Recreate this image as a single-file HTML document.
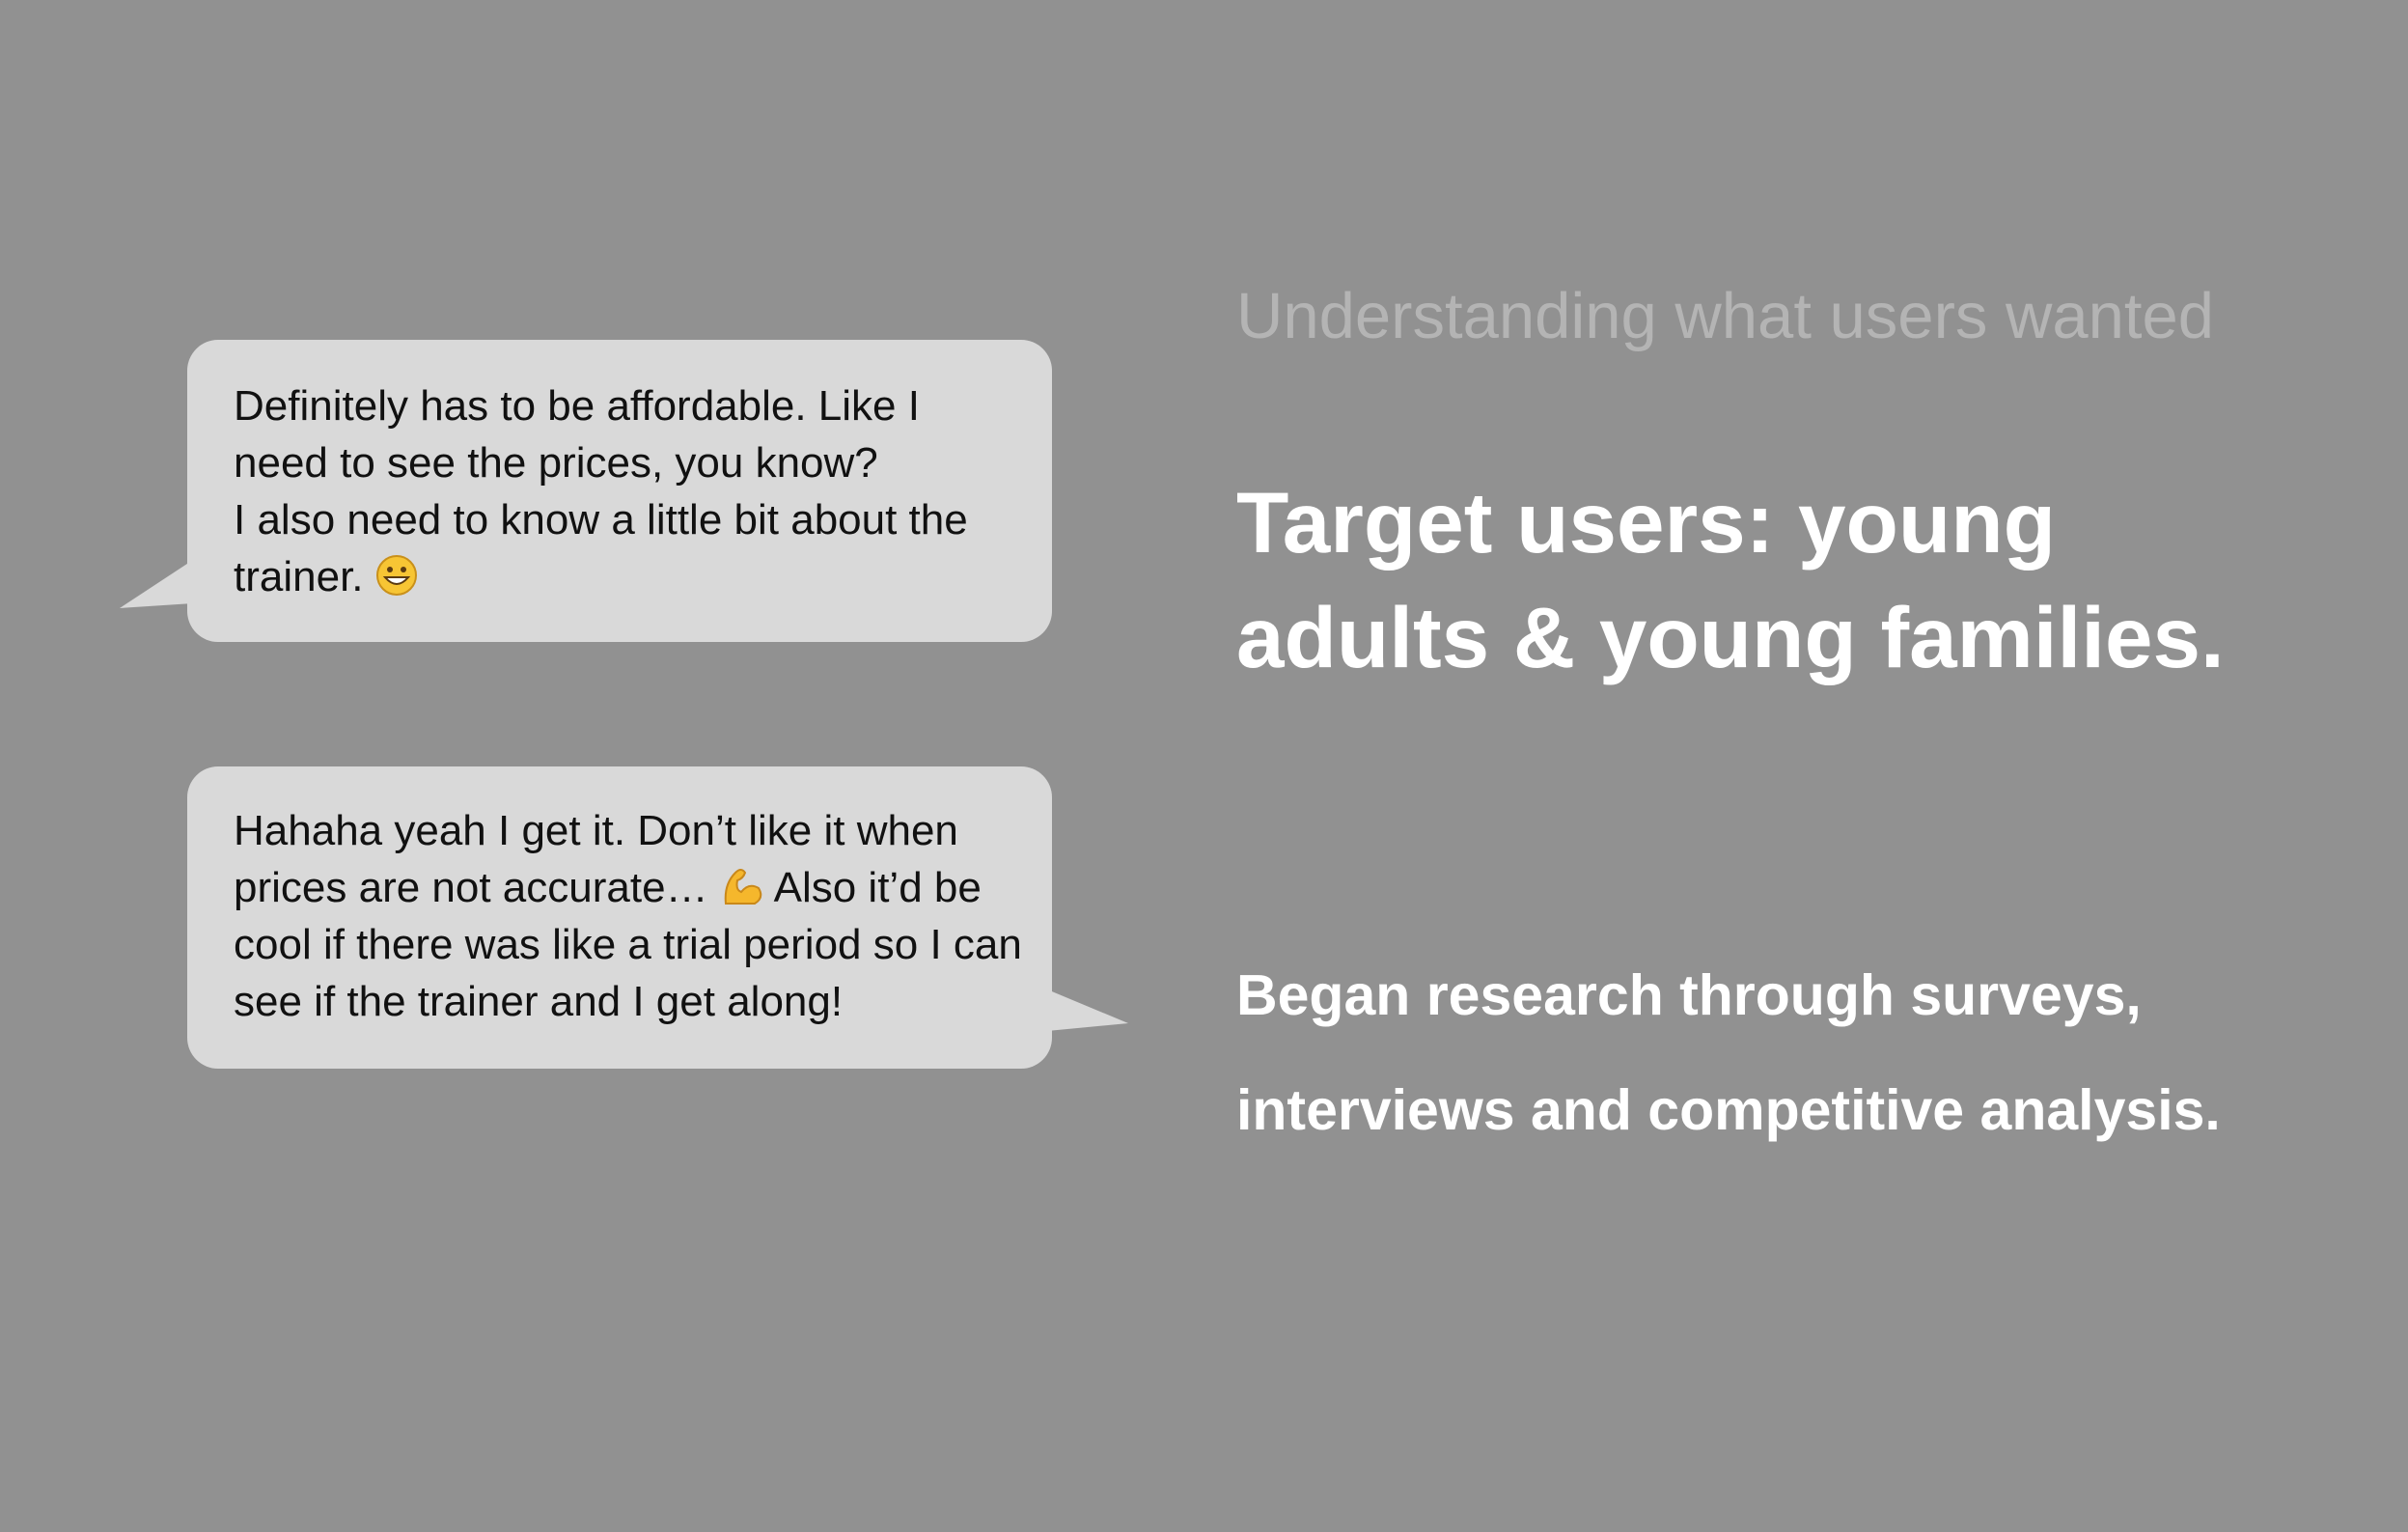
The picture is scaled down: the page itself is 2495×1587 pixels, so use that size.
<!DOCTYPE html>
<html><head><meta charset="utf-8"><style>
html,body{margin:0;padding:0}
body{width:2495px;height:1587px;background:#919191;position:relative;overflow:hidden;font-family:"Liberation Sans",sans-serif}
.b{position:absolute;left:194px;width:896px;height:313px;background:#d9d9d9;border-radius:32px}
.t{position:absolute;left:242px;font-size:44px;line-height:59px;color:#111;white-space:nowrap}
.h{position:absolute;left:1281px;white-space:nowrap}
.e{display:inline-block;vertical-align:-6px}
</style></head><body>
<svg style="position:absolute;left:0;top:0" width="2495" height="1587">
<polygon points="200,580 124,630 200,625" fill="#d9d9d9"/>
<polygon points="1085,1025 1169,1060 1085,1068" fill="#d9d9d9"/>
</svg>
<div class="b" style="top:352px"></div>
<div class="b" style="top:794px"></div>
<div class="t" style="top:391px">Definitely has to be affordable. Like I<br>need to see the prices, you know?<br>I also need to know a little bit about the<br>trainer. <svg class="e" width="44" height="44" viewBox="0 0 44 44"><circle cx="22" cy="22" r="20" fill="#f7c534" stroke="#c9901a" stroke-width="2"/><circle cx="15" cy="16" r="3" fill="#5a3a10"/><circle cx="29" cy="16" r="3" fill="#5a3a10"/><path d="M10 24 Q22 38 34 24 Z" fill="#fff" stroke="#5a3a10" stroke-width="2"/></svg></div>
<div class="t" style="top:831px">Hahaha yeah I get it. Don’t like it when<br>prices are not accurate… <svg class="e" width="46" height="44" viewBox="0 0 46 44"><path d="M6 40 Q4 20 16 8 Q22 2 26 8 Q24 14 18 16 Q16 26 22 28 Q30 18 40 24 Q46 34 36 40 Z" fill="#f5b72c" stroke="#c9881a" stroke-width="2"/></svg> Also it’d be<br>cool if there was like a trial period so I can<br>see if the trainer and I get along!</div>
<div class="h" style="top:294px;font-size:67px;line-height:67px;color:#b4b4b4">Understanding what users wanted</div>
<div class="h" style="top:482px;font-size:89px;line-height:119px;color:#fff;font-weight:bold">Target users: young<br>adults &amp; young families.</div>
<div class="h" style="top:972px;font-size:59px;line-height:119px;color:#fff;font-weight:bold">Began research through surveys,<br>interviews and competitive analysis.</div>
</body></html>
